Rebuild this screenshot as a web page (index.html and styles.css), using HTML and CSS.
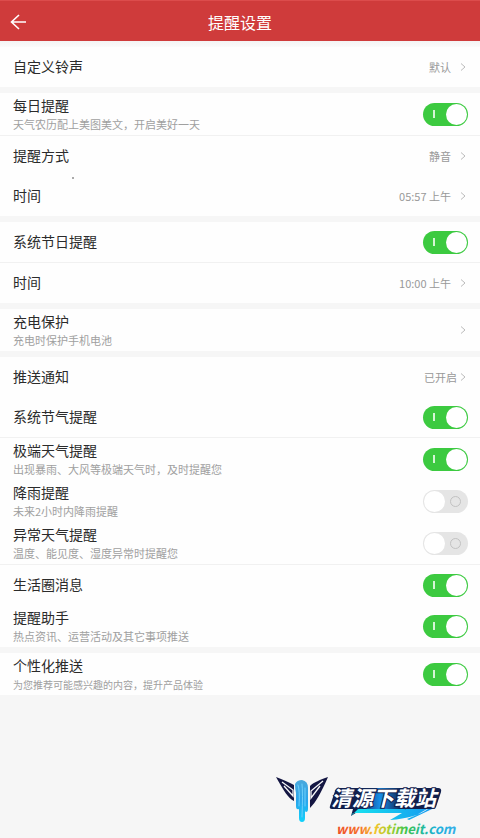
FILE: index.html
```html
<!DOCTYPE html>
<html lang="zh-CN">
<head>
<meta charset="utf-8">
<meta name="viewport" content="width=device-width, initial-scale=1">
<title>提醒设置</title>
<link rel="stylesheet" href="styles.css">
</head>
<body>
<header class="topbar">
  <a class="back" href="#" aria-label="返回"><svg width="18" height="18" viewBox="0 0 18 18"><path d="M16 9H2M9 2L1.500 9L9 16"/></svg></a>
  <h1 class="title">提醒设置</h1>
  <span class="topbar-end"></span>
</header>
<main class="settings">
  <section class="group">
    <a class="row" href="#"><span class="name">自定义铃声</span><span class="value">默认</span><svg class="chevron" viewBox="0 0 6 8"><path d="M1 .5L5 4L1 7.500"/></svg></a>
  </section>
  <section class="group">
    <label class="row tall divided"><span class="text"><span class="name">每日提醒</span><span class="note">天气农历配上美图美文，开启美好一天</span></span><input class="switch" type="checkbox" checked></label>
    <a class="row" href="#"><span class="name">提醒方式</span><span class="value">静音</span><svg class="chevron" viewBox="0 0 6 8"><path d="M1 .5L5 4L1 7.500"/></svg></a>
    <a class="row speck" href="#"><span class="name">时间</span><span class="value">05:57 上午</span><svg class="chevron" viewBox="0 0 6 8"><path d="M1 .5L5 4L1 7.500"/></svg></a>
  </section>
  <section class="group">
    <label class="row divided"><span class="name">系统节日提醒</span><input class="switch" type="checkbox" checked></label>
    <a class="row" href="#"><span class="name">时间</span><span class="value">10:00 上午</span><svg class="chevron" viewBox="0 0 6 8"><path d="M1 .5L5 4L1 7.500"/></svg></a>
  </section>
  <section class="group">
    <a class="row tall" href="#"><span class="text"><span class="name">充电保护</span><span class="note">充电时保护手机电池</span></span><svg class="chevron" viewBox="0 0 6 8"><path d="M1 .5L5 4L1 7.500"/></svg></a>
  </section>
  <section class="group">
    <a class="row" href="#"><span class="name">推送通知</span><span class="value near">已开启</span><svg class="chevron" viewBox="0 0 6 8"><path d="M1 .5L5 4L1 7.500"/></svg></a>
    <label class="row divided"><span class="name">系统节气提醒</span><input class="switch" type="checkbox" checked></label>
    <label class="row tall"><span class="text"><span class="name">极端天气提醒</span><span class="note">出现暴雨、大风等极端天气时，及时提醒您</span></span><input class="switch" type="checkbox" checked></label>
    <label class="row tall"><span class="text"><span class="name">降雨提醒</span><span class="note">未来2小时内降雨提醒</span></span><input class="switch" type="checkbox"></label>
    <label class="row tall divided"><span class="text"><span class="name">异常天气提醒</span><span class="note">温度、能见度、湿度异常时提醒您</span></span><input class="switch" type="checkbox"></label>
    <label class="row"><span class="name">生活圈消息</span><input class="switch" type="checkbox" checked></label>
    <label class="row tall"><span class="text"><span class="name">提醒助手</span><span class="note">热点资讯、运营活动及其它事项推送</span></span><input class="switch" type="checkbox" checked></label>
  </section>
  <section class="group">
    <label class="row tall"><span class="text"><span class="name">个性化推送</span><span class="note small">为您推荐可能感兴趣的内容，提升产品体验</span></span><input class="switch" type="checkbox" checked></label>
  </section>
</main>
<footer class="brand">
  <svg width="190" height="66" viewBox="0 0 190 66">
    <defs>
      <linearGradient id="rainbow" x1="0" x2="1" y1="0" y2="0">
        <stop offset="0" stop-color="#ee4c26"/><stop offset=".2" stop-color="#f5722b"/><stop offset=".32" stop-color="#f5c32c"/><stop offset=".45" stop-color="#a4cf2f"/><stop offset=".58" stop-color="#3fc34b"/><stop offset=".72" stop-color="#22b99a"/><stop offset=".84" stop-color="#1eb0da"/><stop offset="1" stop-color="#39aee8"/>
      </linearGradient>
      <linearGradient id="drip" x1="0" x2="0" y1="0" y2="1">
        <stop offset="0" stop-color="#4aa9dc"/><stop offset=".5" stop-color="#2aa6ec"/><stop offset="1" stop-color="#10d2fb"/>
      </linearGradient>
      <linearGradient id="swoosh" x1="0" x2="1" y1="0" y2="0">
        <stop offset="0" stop-color="#18e4ef"/><stop offset="1" stop-color="#159af0"/>
      </linearGradient>
      <linearGradient id="plate" x1="0" x2="1" y1="0" y2="0">
        <stop offset="0" stop-color="#12204d"/><stop offset=".25" stop-color="#12204d"/><stop offset=".45" stop-color="#168ee8"/><stop offset=".65" stop-color="#12204d"/><stop offset="1" stop-color="#12204d"/>
      </linearGradient>
    </defs>
    <path fill="#141642" d="M6 5C13 8 19 10 24 13V29C18 26 14 19 6 5ZM58 5C50 8 44 10 40 14V36C46 30 51 21 58 5Z"/>
    <path fill="none" stroke="#f5f6f8" stroke-width="1.300" d="M12 10L23 18V24L14 14M53 9L41 19V26L50 14"/>
    <path fill="url(#drip)" d="M25 12Q27 8 32 8Q38 9 38 16V37Q38 40 36 40Q35 40 35 38V46Q35 50 32 50Q29 50 29 46V37Q26 38 26 34V21Q25 17 25 12Z"/>
    <path fill="none" stroke="#6fd0fb" stroke-linecap="round" d="M28 13Q30 18 29 34M32 12Q33 20 32 45M35 16V34"/>
    <path fill="url(#plate)" d="M68 16H168Q172 16 171 20L166 35Q165 37 162 37H92L81 44L83 37H62Q59 37 60 34L65 19Q66 16 68 16Z"/>
    <path fill="url(#swoosh)" d="M88 37H158Q146 46 120 48L132 41H83L81 44ZM139 48L162 37H157Q148 43 137 47Z"/>
    <text class="brand-name" x="61" y="34">清源下载站</text>
    <text class="brand-url" x="66" y="62" fill="url(#rainbow)">www.fotimeit.com</text>
  </svg>
</footer>
</body>
</html>
```
FILE: styles.css
```css
* { box-sizing: border-box; }

body {
  margin: 0;
  min-height: 100vh;
  display: flex;
  flex-direction: column;
  background: #f6f6f6;
  color: #2b2b2b;
  font-family: "Noto Sans CJK SC", sans-serif;
}

a { color: inherit; text-decoration: none; }

.topbar {
  display: flex;
  align-items: center;
  height: 41px;
  padding: 2px 10px 0;
  background: #cf3b3b;
  border-top: 1px solid #dc4c4c;
  color: #fff;
}

.back, .topbar-end { display: flex; width: 18px; }
.back svg { fill: none; stroke: #fff; stroke-width: 1.6; }

.title {
  flex: 1;
  margin: 0;
  text-align: center;
  font-size: 16px;
  line-height: 24px;
  font-weight: 400;
}

.settings {
  display: flex;
  flex-direction: column;
  gap: 6px;
  padding-top: 6px;
  background: linear-gradient(#f4f4f4, #fdfdfd 8px, #f6f6f6 9px);
}

.group { background: #fefefe; }

.row {
  display: flex;
  align-items: center;
  box-sizing: content-box;
  height: 40px;
  padding: 0 12px 0 13px;
}

.tall { height: 42px; }
.divided { border-bottom: 1px solid #f1f1f1; }
.speck { background: radial-gradient(circle, #aaa 1px, transparent 1px) 72px 1px / 2px 2px no-repeat; }

.text {
  flex: 1;
  display: flex;
  flex-direction: column;
}

.name {
  flex: 1;
  padding-bottom: 2px;
  font-size: 14px;
  line-height: 18px;
}

.note {
  color: #a0a0a0;
  font-size: 11px;
  line-height: 17px;
}

.small { font-size: 10px; }

.value {
  margin-right: 9px;
  color: #999;
  font-size: 11px;
  line-height: 16px;
}

.near { margin-right: 3px; }

.chevron {
  width: 6px;
  height: 8px;
  margin-right: 2px;
  fill: none;
  stroke: #bbb;
}

.switch {
  appearance: none;
  display: flex;
  align-items: center;
  justify-content: space-between;
  width: 45px;
  height: 23px;
  margin: 0;
  padding: 1px 7px 1px 1px;
  border-radius: 12px;
  background: #e5e5e5;
}

.switch::before {
  content: "";
  width: 21px;
  height: 21px;
  border-radius: 50%;
  background: #fff;
}

.switch::after {
  content: "";
  width: 9px;
  height: 9px;
  border: 1px solid #c2c2c2;
  border-radius: 50%;
}

.switch:checked {
  flex-direction: row-reverse;
  padding: 1px 1px 1px 10px;
  background: #3cca40;
}

.switch:checked::after {
  width: 2px;
  height: 8px;
  border: 0;
  border-radius: 0;
  background: #d5f5d5;
}

.brand {
  display: flex;
  margin: auto 20px 0 auto;
}

.brand-name {
  font-size: 21px;
  font-weight: 700;
  font-style: italic;
  fill: #fff;
  stroke: #12204d;
  stroke-width: 2px;
  paint-order: stroke;
}

.brand-url {
  font-size: 13px;
  font-weight: 700;
  font-style: italic;
}
```
